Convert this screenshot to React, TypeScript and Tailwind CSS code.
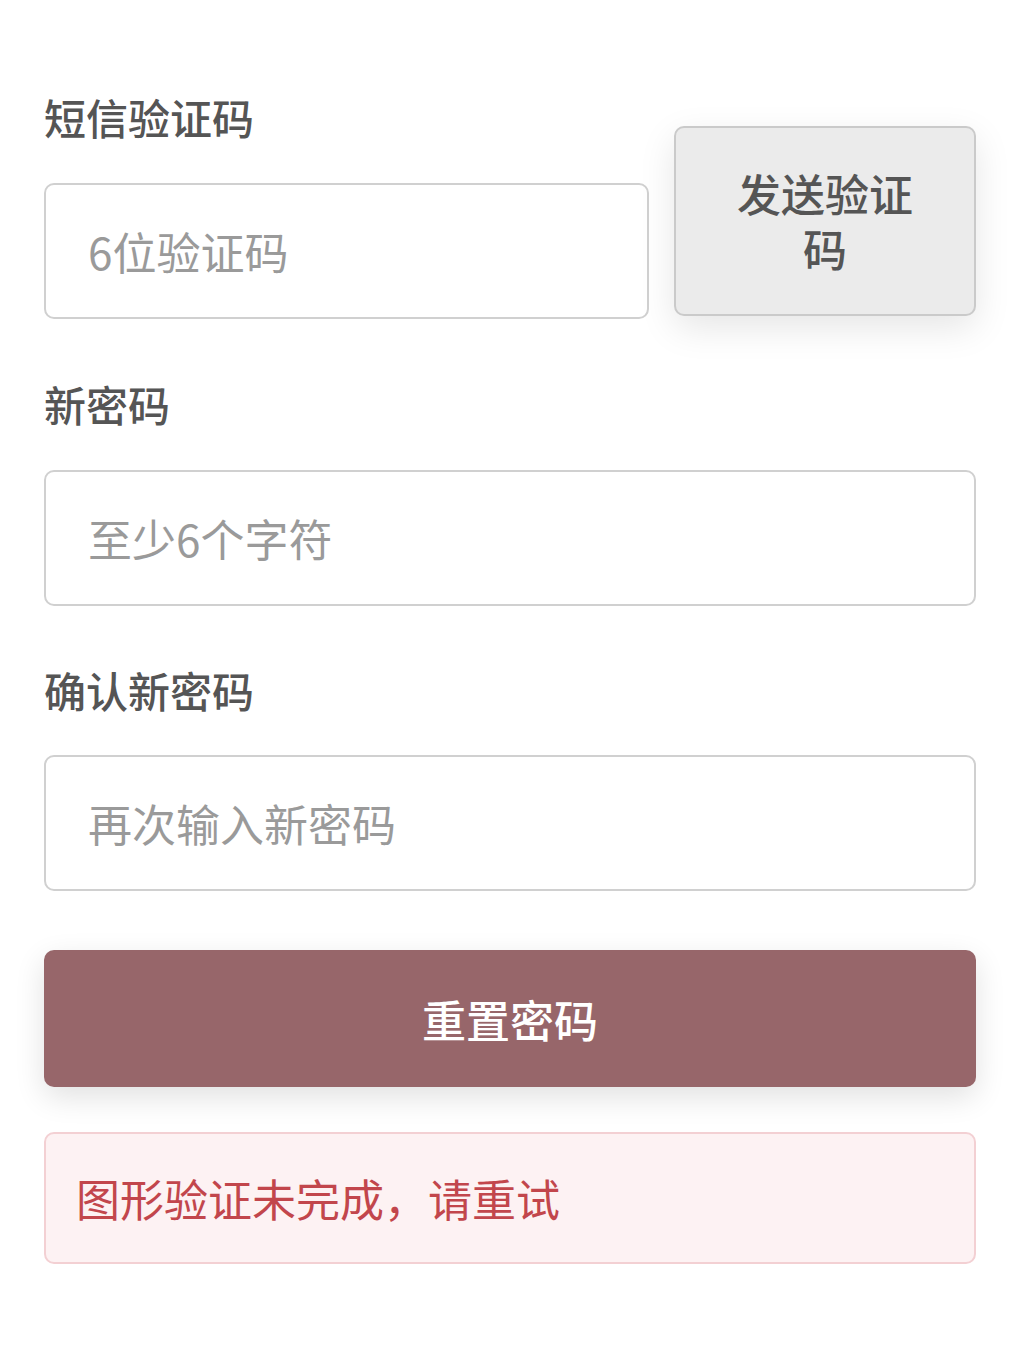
const font = { fontFamily: '"Noto Sans CJK SC", "Noto Sans", sans-serif' };

function Label({ children }: { children: React.ReactNode }) {
  return (
    <div className="text-[42px] leading-[1.4] font-medium text-[#555555] mb-[36px]">
      {children}
    </div>
  );
}

function Field({ placeholder }: { placeholder: string }) {
  return (
    <input
      type="text"
      placeholder={placeholder}
      className="block w-full h-[136px] rounded-[10px] border-2 border-[#d0d0d0] bg-white px-[42px] text-[44px] text-[#333] placeholder:text-[#9a9a9a] outline-none"
      style={font}
    />
  );
}

export default function App() {
  return (
    <div className="min-h-screen bg-white px-[44px] pt-[88px]" style={font}>
      <div className="flex items-end gap-[25px]">
        <div className="flex-1">
          <Label>短信验证码</Label>
          <Field placeholder="6位验证码" />
        </div>
        <button
          className="w-[302px] h-[190px] mb-[3px] rounded-[10px] border-2 border-[#cacaca] bg-[#ebebeb] px-[58px] text-[44px] leading-[1.25] font-medium text-[#555555] shadow-[0_12px_36px_rgba(0,0,0,0.10)]"
          style={font}
        >
          发送验证码
        </button>
      </div>

      <div className="mt-[56px]">
        <Label>新密码</Label>
        <Field placeholder="至少6个字符" />
      </div>

      <div className="mt-[55px]">
        <Label>确认新密码</Label>
        <Field placeholder="再次输入新密码" />
      </div>

      <button
        className="mt-[59px] block w-full h-[137px] rounded-[10px] bg-[#97666a] text-[44px] font-medium text-white shadow-[0_10px_30px_rgba(0,0,0,0.12)]"
        style={font}
      >
        重置密码
      </button>

      <div className="mt-[45px] h-[132px] flex items-center rounded-[10px] border-2 border-[#f3d0d3] bg-[#fdf2f3] px-[30px] text-[44px] text-[#c2464c]">
        图形验证未完成，请重试
      </div>
    </div>
  );
}
